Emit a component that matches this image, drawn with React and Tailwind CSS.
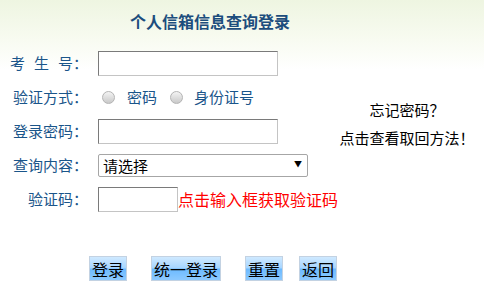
import React, { useState } from 'react';

const inputCls =
  'h-[25px] border border-t-[#7a7a7a] border-l-[#7a7a7a] border-r-[#c4c4c4] border-b-[#c4c4c4] bg-white px-1 text-[14px] outline-none';

const Row = ({ label, children }) => (
  <div className="flex h-[34px] items-center">
    <label className="w-[88px] shrink-0 whitespace-nowrap text-right text-[15px] leading-[20px] text-[#1a558a]">
      {label}
    </label>
    <div className="ml-[10px] flex items-center">{children}</div>
  </div>
);

const Radio = ({ name, checked, onChange }) => (
  <input
    type="radio"
    name={name}
    checked={checked}
    onChange={onChange}
    className="h-[13px] w-[13px] appearance-none rounded-full border border-[#b4b4b4] bg-gradient-to-b from-[#f4f4f4] to-[#c9c9c9]"
  />
);

const Btn = ({ children, className }) => (
  <button
    className={
      'h-[25px] border border-[#c3d2e2] bg-[linear-gradient(#cfe9ff_0%,#a6d5ff_48%,#6cbaff_52%,#8cc9ff_100%)] text-[16px] leading-[22px] text-black ' +
      className
    }
  >
    {children}
  </button>
);

const App = () => {
  const [mode, setMode] = useState('');
  const [kind, setKind] = useState('');

  return (
    <div className="h-[299px] w-[484px] overflow-hidden bg-[linear-gradient(#eef5e1_0px,#f8fbf1_40px,#ffffff_70px)] font-['Noto_Sans_CJK_SC','Noto_Sans',sans-serif]">
      <div className="h-[46px] pl-[130px] pt-[11px]">
        <h1 className="text-[16px] font-bold leading-[20px] text-[#1c4d7d]">个人信箱信息查询登录</h1>
      </div>

      <div className="flex">
        <form className="w-[330px] shrink-0">
          <Row
            label={
              <>
                考<span className="ml-[9px]">生</span>
                <span className="ml-[9px]">号：</span>
              </>
            }
          >
            <input type="text" className={inputCls + ' w-[180px]'} />
          </Row>
          <Row label="验证方式：">
            <div className="ml-[4px] flex items-center text-[15px] leading-[20px] text-[#1a558a]">
              <Radio name="mode" checked={mode === 'pwd'} onChange={() => setMode('pwd')} />
              <span className="ml-[12px]">密码</span>
              <span className="ml-[13px] flex">
                <Radio name="mode" checked={mode === 'id'} onChange={() => setMode('id')} />
              </span>
              <span className="ml-[11px]">身份证号</span>
            </div>
          </Row>
          <Row label="登录密码：">
            <input type="password" className={inputCls + ' w-[180px]'} />
          </Row>
          <Row label="查询内容：">
            <div className="relative">
              <select
                value={kind}
                onChange={(e) => setKind(e.target.value)}
                className="h-[23px] w-[210px] appearance-none rounded-[2px] border border-[#a6a6a6] bg-white pl-[4px] text-[15px] leading-[20px] text-black outline-none"
              >
                <option value="">请选择</option>
                <option value="1">成绩查询</option>
                <option value="2">信息查询</option>
              </select>
              <span className="pointer-events-none absolute right-[6px] top-[5px] text-[8px] leading-[12px] text-black">▼</span>
            </div>
          </Row>
          <Row label="验证码：">
            <input type="text" className={inputCls + ' w-[80px]'} />
            <span className="whitespace-nowrap text-[16px] leading-[20px] text-[#ff0000]">点击输入框获取验证码</span>
          </Row>
        </form>

        <div className="flex-1 pt-[50px] text-center text-[15px] leading-[28px] text-black">
          <p>忘记密码？</p>
          <p>点击查看取回方法！</p>
        </div>
      </div>

      <div className="mt-[40px] flex">
        <Btn className="ml-[89px] w-[38px]">登录</Btn>
        <Btn className="ml-[24px] w-[70px]">统一登录</Btn>
        <Btn className="ml-[24px] w-[38px]">重置</Btn>
        <Btn className="ml-[16px] w-[38px]">返回</Btn>
      </div>
    </div>
  );
};

export default App;
